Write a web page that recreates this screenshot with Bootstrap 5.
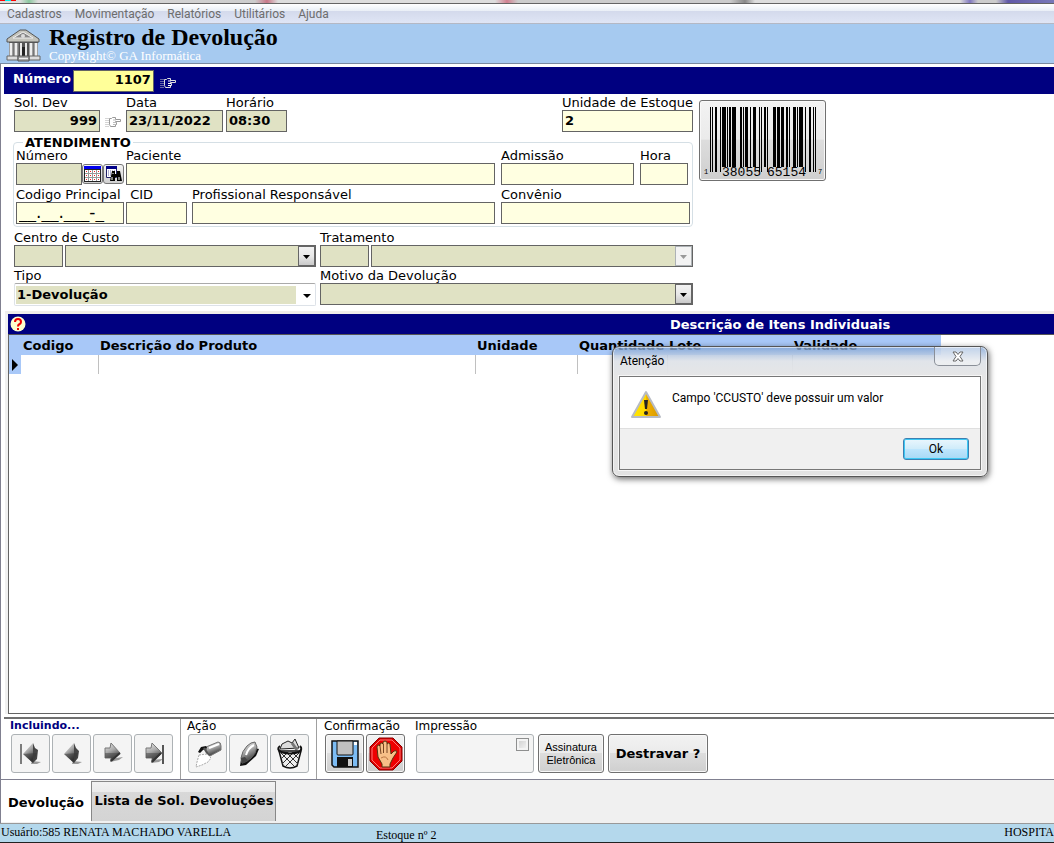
<!DOCTYPE html>
<html lang="pt-BR">
<head>
<meta charset="utf-8">
<meta name="viewport" content="width=device-width, initial-scale=1">
<title>Registro de Devolução</title>
<link href="https://cdn.jsdelivr.net/npm/bootstrap@5.3.0/dist/css/bootstrap.min.css" rel="stylesheet">
<style>
:root { --navy:#000080; --sky:#a6caf0; --olive:#e0e2c4; --cream:#ffffe1; --line:#646464; }
body { font-family:"DejaVu Sans",Verdana,sans-serif; font-size:13px; line-height:15px; color:#000; background:#fff; overflow-x:hidden; }
button { font:inherit; color:inherit; padding:0; }
.desk-strip { height:4px; border-bottom:1px solid #646464; background:
  linear-gradient(90deg,#f00 0 5px,#0ee 5px 11px,#f00 11px 16px,transparent 16px) 0 0/100% 1px no-repeat,
  linear-gradient(90deg,#ddd 0 20px,#8cc8a0 29px,#ddd 38px,#ccc 255px,#c87888 267px,#ddd 278px,#ddd 495px,#d08090 507px,#ccc 518px,#ccc 730px,#888 745px,#ddd 755px,#ddd 960px,#8078c0 970px,#ccc 978px,#ccc 996px,#6058a8 1008px,#7878b8); }
.menu-strip { height:20px; padding-left:7px; gap:13px; font:12px/20px Roboto,"Noto Sans",sans-serif; background:linear-gradient(#fff,#e8eef6 38%,#d4daec 39%,#dfe5f5); border-bottom:1px solid #b4b8c4; }
.menu-strip a { color:#6d6d6d; text-decoration:none; }
.title-strip { height:40px; background:var(--sky); border-bottom:1px solid #7a8aa0; padding-left:6px; font-family:"Liberation Serif",serif; }
.title-strip h1 { font-size:24px; line-height:27px; font-weight:700; margin:0; }
.title-strip p { font-size:13px; line-height:10px; color:#fff; margin:0; }
.workspace { border-left:1px solid #808090; }
.number-strip { height:27px; margin:3px 0 0 3px; padding-left:9px; gap:2px; background:var(--navy); color:#fff; font-weight:700; }
.box { display:block; width:100%; height:22px; min-width:0; border:1px solid var(--line); border-radius:0; padding:0 2px 2px; color:#000; background-color:var(--cream); font:bold 13px/18px "DejaVu Sans",Verdana,sans-serif; appearance:none; outline:0; }
.box-olive { background-color:var(--olive); }
.box-num { width:81px; background-color:#ffff99; }
.box-mask { font-weight:400; font-size:17px; }
.hand { border:0; background:none; display:block; }
.combo { background-repeat:no-repeat; background-position:right 0 center; background-image:url("data:image/svg+xml,%3Csvg xmlns='http://www.w3.org/2000/svg' width='17' height='20'%3E%3ClinearGradient id='a' x2='0' y2='1'%3E%3Cstop stop-color='%23f3f3f3'/%3E%3Cstop offset='.5' stop-color='%23e8e8e8'/%3E%3Cstop offset='1' stop-color='%23c8c8c8'/%3E%3C/linearGradient%3E%3Crect x='.5' y='.5' width='16' height='19' fill='url(%23a)' stroke='%23666'/%3E%3Cpath d='M5 9h7l-3.5 4z'/%3E%3C/svg%3E"); }
.combo-off { background-image:url("data:image/svg+xml,%3Csvg xmlns='http://www.w3.org/2000/svg' width='17' height='20'%3E%3Crect x='.5' y='.5' width='16' height='19' fill='%23f3f3f3' stroke='%23adb2b5'/%3E%3Cpath d='M5 9h7l-3.5 4z' fill='%23999'/%3E%3C/svg%3E"); opacity:1; }
.combo-open { height:23px; padding:0 2px; border-color:#aaa #dde2e8 #dde2e8; border-radius:2px; background-color:#fff; background-image:linear-gradient(var(--olive),var(--olive)),url("data:image/svg+xml,%3Csvg xmlns='http://www.w3.org/2000/svg' width='17' height='20'%3E%3Cpath d='M5 9h8l-4 4z'/%3E%3C/svg%3E"); background-size:calc(100% - 20px) 18px,17px 20px; background-position:1px 2px,right 0 center; }
.form-side { width:679px; }
.form-zone { padding:1px 0 0 13px; gap:6px; }
.fields { display:grid; }
.fields label { display:block; line-height:15px; white-space:nowrap; }
.f-top { grid-template-columns:86px 20px 97px 61px 1fr 131px; column-gap:3px; }
.f-top > :last-child { grid-column:6; }
.f-pat { grid-template-columns:110px 375px 139px 48px; }
.f-prof { grid-template-columns:110px 66px 309px 189px; margin-top:2px; }
.w-id { width:108px; } .w-pat { width:369px; } .w-adm { width:133px; } .w-cid { width:61px; } .w-prof { width:303px; }
.f-cost { grid-template-columns:302px 373px; gap:1px 4px; }
.pair { display:grid; grid-template-columns:49px 1fr; gap:2px; }
.attend { border:1px solid #d5dfe5; border-radius:4px; padding:0 2px 2px; margin:4px 0 3px -1px; width:680px; }
.attend legend { float:none; width:auto; font-size:13px; line-height:13px; font-weight:700; padding:0 2px; margin:0 0 -1px 7px; }
.mini { width:21px; height:20px; border:1px solid #777; border-radius:3px; background:linear-gradient(#f4f4f4,#d0d0d0); display:flex; align-items:center; justify-content:center; }
.raised { border:1px solid #707070; border-radius:3px; background:linear-gradient(#f2f2f2,#ebebeb 48%,#ddd 50%,#cfcfcf); box-shadow:inset 0 0 0 1px #f8f8f8; }
.flat { border:1px solid #adb2b5; border-radius:3px; background:#f4f4f4; }
.barcode { margin-top:5px; }
.items { position:relative; border-left:3px solid #f0f0f0; border-top:3px solid #f0eeea; margin:5px 0 0 4px; }
.items-body { border-left:1px solid var(--line); border-bottom:1px solid var(--line); }
.items-title { height:21px; background:var(--navy); color:#fff; font-weight:700; border-bottom:1px solid #555; padding-left:2px; }
.items-title span { margin-left:644px; }
.grid-data { table-layout:fixed; width:932px; border-collapse:collapse; }
.grid-data th { background:#a8c8f8; height:20px; padding:0 2px; font-weight:700; white-space:nowrap; }
.grid-data td { height:19px; padding:0; border-right:1px solid #c0c0c0; }
.grid-data td:first-child { background:#a8c8f8; border:0; }
.grid-data td:last-child { border:0; }
.c-mark{width:12px}.c-code{width:77px}.c-name{width:377px}.c-unit{width:102px}.c-qty{width:90px}.c-lot{width:125px}.c-due{width:149px}
.alert-win { position:absolute; left:604px; top:32px; width:376px; height:131px; padding:0 6px 7px; border:1px solid #555; border-radius:7px; background:linear-gradient(rgba(120,158,210,.75),rgba(222,226,232,.92) 14px,#e6e6e6 30px,#e2e2e2); box-shadow:inset 0 0 0 1px #fff9,1px 2px 6px #0009; font:12px/16px Roboto,"Noto Sans",sans-serif; color:#000; }
.alert-head { height:29px; padding-left:1px; }
.alert-head span { padding-top:6px; }
.alert-close { width:47px; height:19px; border:1px solid #8a8f98; border-top:0; border-radius:0 0 5px 5px; background:#ffffff60; }
.alert-box { border:1px solid #777; box-shadow:0 0 0 1px #f6f6f6; background:#fff; }
.alert-msg { height:52px; padding:13px 10px 0; gap:10px; border-bottom:1px solid #dfdfdf; }
.alert-foot { height:40px; background:#f0f0f0; padding:9px 11px; }
.ok { width:66px; height:22px; border:1px solid #3c7fb1; border-radius:3px; background:linear-gradient(#eaf6fd,#d0ecfa 48%,#bee6fd 50%,#a7d9f5); box-shadow:inset 0 0 0 1px #3cc8f4; }
.tools { border-top:2px solid #707070; margin:3px 0 0 3px; }
.tools section { padding:0 7px 0 7px; border-right:1px solid #a0a0a0; height:60px; }
.tools section.no-rule { border:0; padding:0 3px 0 8px; }
.tools h2 { font-size:12px; line-height:14px; margin:0 0 1px -1px; font-weight:400; }
.tools .mode { font-size:11px; font-weight:700; color:var(--navy); }
.btn-row { display:flex; gap:2px; }
.tool { width:39px; height:39px; display:flex; align-items:center; justify-content:center; }
.print-box { width:118px; height:39px; padding:3px 4px; }
.tick { appearance:none; width:13px; height:13px; border:1px solid #8e8f8f; background:linear-gradient(135deg,#ccc,#f8f8f8); box-shadow:inset 0 0 0 2px #f4f4f4; margin:0; }
.sign { width:66px; height:39px; font:11px/13px "Liberation Sans",Arial,sans-serif; }
.unlock { width:100px; height:39px; font-weight:700; }
.tab-strip { height:44px; background:#f0f0f0; border-top:1px solid #808090; }
.tab-on { border:0; background:#fff; width:90px; height:42px; padding-top:3px; font-weight:700; }
.tab-off { border:1px solid #888; border-width:1px 1px 0; background:linear-gradient(#f2f2f2,#ebebeb 25%,#d8d8d8 27%,#d4d4d4); width:185px; height:40px; margin-top:1px; font-weight:700; padding:0 0 2px 1px; white-space:nowrap; }
.status { display:grid; grid-template-columns:375px 1fr auto; height:20px; padding-left:1px; background:#b4d8ec; border-top:1px solid #999; border-bottom:1px solid #222; font:12px/17px "Liberation Serif",serif; white-space:nowrap; }
.status .low { padding-top:3px; line-height:16px; }
</style>
</head>
<body class="d-flex flex-column min-vh-100">
<div class="desk-strip"></div>
<nav class="menu-strip d-flex" aria-label="Menu">
  <a href="#">Cadastros</a><a href="#">Movimentação</a><a href="#">Relatórios</a><a href="#">Utilitários</a><a href="#">Ajuda</a>
</nav>
<header class="title-strip d-flex">
  <svg class="mt-1 me-2" width="35" height="34" viewBox="0 0 35 34" aria-hidden="true">
    <path d="M1 11L14 2h6l13 9v3H1z" fill="#c4c4bc" stroke="#555"/><path d="M7 10l10-6 10 6z" fill="#888" stroke="#eee"/><circle cx="17" cy="8" r="2" fill="#ddd"/>
    <path d="M3 14h29v15H3z" fill="#555"/><path d="M5 15v13M10 15v13M25 15v13M30 15v13" stroke="#eee" stroke-width="3"/><path d="M7 15v13M12 15v13M27 15v13" stroke="#999"/>
    <path d="M14 19h7v10h-7z" fill="#222"/><path d="M15 15v13M20 15v13" stroke="#e8e8e8" stroke-width="2"/>
    <path d="M1 28h11v4H1zM23 28h11v4H23z" fill="#ddd" stroke="#666"/><path d="M12 28h11v5H12z" fill="#aaa" stroke="#555"/><path d="M13 30.500h9" stroke="#eee"/>
  </svg>
  <div><h1>Registro de Devolução</h1><p>CopyRight© GA Informática</p></div>
</header>

<main class="workspace d-flex flex-column flex-grow-1">
  <div class="number-strip d-flex align-items-center">
    <label for="numero" class="pb-1">Número</label>
    <input id="numero" class="box box-num text-end" value="1107">
    <button class="hand ms-1 mt-1" aria-label="Buscar número">
      <svg class="d-block" width="17" height="12" viewBox="0 0 17 12"><path d="M1 2v9M3 2v9" stroke="#ccc" stroke-dasharray="1 1"/><path d="M4.500 2.500h2l1-1h3v2h5v2h-5v1h1v2h-1v2h-5l-1-2z" fill="#000080" stroke="#e0e0e0"/><path d="M8 4h3M8 6.500h3M8 8.500h3" stroke="#fff"/></svg>
    </button>
  </div>

  <div class="form-zone d-flex">
    <form class="form-side flex-shrink-0">
      <div class="fields f-top">
        <div><label for="soldev">Sol. Dev</label><input id="soldev" class="box box-olive text-end" value="999"></div>
        <button type="button" class="hand align-self-end pb-1" aria-label="Buscar solicitação">
          <svg class="d-block mx-auto" width="17" height="12" viewBox="0 0 17 12"><path d="M1 2v9M3 2v9" stroke="#aaa" stroke-dasharray="1 1"/><path d="M4.500 2.500h2l1-1h3v2h5v2h-5v1h1v2h-1v2h-5l-1-2z" fill="#fff" stroke="#999"/><path d="M8 4h3M8 6.500h3M8 8.500h3" stroke="#bbb"/></svg>
        </button>
        <div><label for="data">Data</label><input id="data" class="box box-olive" value="23/11/2022"></div>
        <div><label for="horario">Horário</label><input id="horario" class="box box-olive" value="08:30"></div>
        <div><label for="unidade">Unidade de Estoque</label><input id="unidade" class="box" value="2"></div>
      </div>

      <fieldset class="attend">
        <legend>ATENDIMENTO</legend>
        <div class="fields f-pat">
          <div class="w-id"><label for="atnum">Número</label>
            <div class="d-flex align-items-center">
              <input id="atnum" class="box box-olive">
              <button type="button" class="mini flex-shrink-0" aria-label="Calendário"><svg width="17" height="16" shape-rendering="crispEdges"><path fill="#222" d="M0 0h17v16H0z"/><path fill="#00e" d="M0 0h17v3H0z"/><path fill="#fff" d="M1 4h15v11H1z"/><path d="M1 7.500h15M1 11.500h15M4.500 4v11M8.500 4v11M12.500 4v11" stroke="#999"/><path d="M2 5.500h14M2 9.500h14M2 13.500h14" stroke="#e22" stroke-dasharray="1 3"/></svg></button>
              <button type="button" class="mini flex-shrink-0" aria-label="Localizar"><svg width="17" height="16"><path fill="#fff" stroke="#226" d="M1.500 1.500h10v10h-10z"/><path fill="#008" d="M1 0h11v3H1z"/><path d="M3 5h7M3 7h5M3 9h4" stroke="#66a" stroke-dasharray="1 1"/><path d="M7 5h3v3h2V5h3l2 10h-5v-4h-2v4H5z"/><path d="M7 11v3M14 11v3M8 7v1" stroke="#fff"/></svg></button>
            </div></div>
          <div class="w-pat"><label for="paciente">Paciente</label><input id="paciente" class="box"></div>
          <div class="w-adm"><label for="admissao">Admissão</label><input id="admissao" class="box"></div>
          <div><label for="hora">Hora</label><input id="hora" class="box"></div>
        </div>
        <div class="fields f-prof">
          <div class="w-id"><label for="codigo">Codigo Principal</label><input id="codigo" class="box box-mask" value="__.__.___-_"></div>
          <div class="w-cid"><label for="cid">&nbsp;CID</label><input id="cid" class="box"></div>
          <div class="w-prof"><label for="prof">Profissional Responsável</label><input id="prof" class="box"></div>
          <div><label for="conv">Convênio</label><input id="conv" class="box"></div>
        </div>
      </fieldset>

      <div class="fields f-cost">
        <div><label for="cc">Centro de Custo</label>
          <div class="pair"><input id="cc" class="box box-olive"><select class="box box-olive combo" aria-label="Centro de Custo"><option></option></select></div></div>
        <div><label for="trat">Tratamento</label>
          <div class="pair"><input id="trat" class="box box-olive"><select class="box box-olive combo combo-off" aria-label="Tratamento" disabled><option></option></select></div></div>
        <div><label for="tipo">Tipo</label><select id="tipo" class="box combo combo-open"><option>1-Devolução</option></select></div>
        <div><label for="motivo">Motivo da Devolução</label><select id="motivo" class="box box-olive combo"><option></option></select></div>
      </div>
    </form>
    <div>
      <button class="barcode raised d-block" aria-label="Código de barras">
        <svg class="d-block" width="125" height="79" viewBox="0 0 125 79">
          <path shape-rendering="crispEdges" d="M10 6h1v65h-1zM12 6h1v65h-1zM15 6h2v65h-2zM20 6h1v65h-1zM22 6h4v60h-4zM27 6h1v60h-1zM29 6h2v60h-2zM32 6h4v60h-4zM40 6h2v60h-2zM43 6h1v60h-1zM45 6h3v60h-3zM50 6h1v60h-1zM53 6h3v60h-3zM59 6h1v65h-1zM61 6h1v65h-1zM64 6h2v60h-2zM67 6h1v65h-1zM73 6h3v60h-3zM77 6h3v60h-3zM81 6h3v60h-3zM86 6h2v60h-2zM89 6h1v60h-1zM93 6h3v60h-3zM97 6h1v60h-1zM99 6h4v60h-4zM105 6h1v65h-1zM109 6h2v65h-2zM113 6h1v65h-1zM115 6h1v65h-1z"/>
          <g font-family="Liberation Mono,monospace" font-size="13"><text x="22" y="75">38055</text><text x="67" y="75">65154</text></g>
          <g font-family="Liberation Mono,monospace" font-size="7"><text x="4" y="73">1</text><text x="118" y="73">7</text></g>
        </svg>
      </button>
    </div>
  </div>

  <section class="items d-flex flex-column flex-grow-1">
    <div class="items-title d-flex align-items-center">
      <svg width="16" height="16" aria-hidden="true"><circle cx="8" cy="8" r="7.500" fill="#ffc"/><path d="M5 6q0-3 3-3t3 3q0 1.500-2 2.500-1 .500-1 2" fill="none" stroke="#e00" stroke-width="2"/><path d="M7 12h2v2H7z" fill="#e00"/></svg>
      <span>Descrição de Itens Individuais</span>
    </div>
    <div class="items-body flex-grow-1">
      <table class="grid-data">
        <colgroup><col class="c-mark"><col class="c-code"><col class="c-name"><col class="c-unit"><col class="c-qty"><col class="c-lot"><col class="c-due"></colgroup>
        <thead><tr><th></th><th>Codigo</th><th>Descrição do Produto</th><th>Unidade</th><th>Quantidade</th><th>Lote</th><th>Validade</th></tr></thead>
        <tbody><tr><td><svg class="d-block" width="10" height="12"><path d="M3 0l6 6-6 6z"/></svg></td><td></td><td></td><td></td><td></td><td></td><td></td></tr></tbody>
      </table>
    </div>
    <div class="alert-win" role="alertdialog" aria-labelledby="aviso">
      <div class="alert-head d-flex justify-content-between">
        <span id="aviso">Atenção</span>
        <button class="alert-close d-flex align-items-center justify-content-center" aria-label="Fechar"><svg width="12" height="11"><path d="M1 1h3l2 2.500L8 1h3L8 5.500l3 4.500H8L6 7.500 4 10H1l3-4.500z" fill="#fff" stroke="#666"/></svg></button>
      </div>
      <div class="alert-box">
        <div class="alert-msg d-flex">
          <svg width="32" height="29" viewBox="0 0 32 29" aria-hidden="true"><defs><linearGradient id="warn"><stop stop-color="#ffe800"/><stop offset=".5" stop-color="#ffd800"/><stop offset=".52" stop-color="#f0b000"/><stop offset="1" stop-color="#d89800"/></linearGradient></defs><path d="M16 2L30 27H2z" fill="url(#warn)" stroke="#b8bcc4" stroke-width="2" stroke-linejoin="round"/><path d="M14 10h4l-1 9h-2z" fill="#222"/><circle cx="16" cy="23" r="2" fill="#222"/></svg>
          <span>Campo 'CCUSTO' deve possuir um valor</span>
        </div>
        <div class="alert-foot text-end"><button class="ok">Ok</button></div>
      </div>
    </div>
  </section>

  <div class="tools d-flex">
    <section><h2 class="mode">Incluindo...</h2>
      <div class="btn-row">
        <svg width="0" height="0" class="position-absolute"><defs><linearGradient id="metal" x2="0.4" y2="1"><stop stop-color="#eee"/><stop offset=".5" stop-color="#aaa"/><stop offset="1" stop-color="#333"/></linearGradient></defs></svg>
        <button class="tool flat" aria-label="Primeiro"><svg width="26" height="26"><path d="M14 20l9 1-4 2-6 0z" fill="#999"/><path d="M3 3v20" stroke="#555" stroke-width="1.500"/><path d="M15 2v20L5 13z" fill="url(#metal)"/><path d="M15 2l2 5 3 2-1 9-4 4z" fill="#444"/><path d="M5 13l14-1-4 10z" fill="#333" opacity=".5"/></svg></button>
        <button class="tool flat" aria-label="Anterior"><svg width="26" height="26"><path d="M14 20l9 1-4 2-6 0z" fill="#999"/><path d="M15 2v20L5 13z" fill="url(#metal)"/><path d="M15 2l2 5 3 3-1 7-4 5z" fill="#444"/><path d="M5 13l14-1-4 10z" fill="#333" opacity=".5"/></svg></button>
        <button class="tool flat" aria-label="Próximo"><svg width="26" height="26"><path d="M10 18l13-2-4 3-9 2z" fill="#999"/><path d="M5 7h5l1-5 9 10-9 8v-3H5z" fill="url(#metal)" stroke="#777"/><path d="M5 12h14l-8 8v-3H5z" fill="#444" opacity=".5"/><path d="M11 20l9-8" stroke="#333" stroke-width="2"/></svg></button>
        <button class="tool flat" aria-label="Último"><svg width="26" height="26"><path d="M10 19l12-1-4 3-8 1z" fill="#999"/><path d="M5 7h5l1-5 10 10-10 9v-4H5z" fill="url(#metal)" stroke="#777"/><path d="M5 12h15l-9 9v-4H5z" fill="#444" opacity=".5"/><path d="M11 21l9-9" stroke="#333" stroke-width="2"/><path d="M22 4v19" stroke="#555" stroke-width="2"/></svg></button>
      </div>
    </section>
    <section><h2>Ação</h2>
      <div class="btn-row">
        <button class="tool flat" aria-label="Novo"><svg width="28" height="28"><path d="M12 7l12-5q3 0 3 4v4l-11 6q-3-1-4-9z" fill="url(#metal)" stroke="#777"/><path d="M15 8l10-4" stroke="#fff" stroke-width="2"/><path d="M4 12l3-5 5-1 1 2-4 2-3 3z" fill="#111"/><path d="M10 8l5 8" stroke="#555" stroke-width="2"/><path d="M5 15l8-1 4 4-3 4-6 3-6 2 1-5z" fill="#fff" stroke="#aaa" stroke-dasharray="2 1"/></svg></button>
        <button class="tool flat" aria-label="Editar"><svg width="26" height="28"><path d="M5 19L19 8l4 1-3 7-10 9-6 1z" fill="#111"/><path d="M5 18q1-7 6-12 4-4 8-4l2 5q-1 7-6 11-4 4-9 5z" fill="url(#metal)" stroke="#666"/><path d="M5 18l4-1 3 4-6 3z" fill="#444"/><path d="M10 15q2-7 8-10" fill="none" stroke="#fff" stroke-width="2"/></svg></button>
        <button class="tool flat" aria-label="Excluir"><svg width="28" height="32"><path d="M4 11L6 6l6-3 4 2 3-4 4 9z" fill="#ddd" stroke="#222"/><path d="M16 5l5 7" stroke="#777" stroke-width="3"/><path d="M3 13l4 15q7 4 14 0l4-15z" fill="#eee" stroke="#111" stroke-width="1.500"/><path d="M5 15l14 14M10 14l12 12M16 14l7 7M23 15L9 29M18 14L6 26M12 14l-7 7" stroke="#333"/><path d="M4 8q-4 3 1 6 9 3 18 0 4-3 1-6" fill="none" stroke="#111" stroke-width="2"/></svg></button>
      </div>
    </section>
    <section class="no-rule"><h2>Confirmação</h2>
      <div class="btn-row">
        <button class="tool raised" aria-label="Salvar"><svg width="28" height="28"><path d="M1 1h26v26H3l-2-2z" fill="#7cbcf4" stroke="#111" stroke-width="1.500"/><path d="M6 1h16v13q0 1-1 1H7q-1 0-1-1z" fill="#c0c0c0" stroke="#111"/><path d="M23 2h3v3h-3z" fill="#fff"/><path d="M6 17h16v10H6z" fill="#111"/><path d="M17 19h4v7h-4z" fill="#ccc"/></svg></button>
        <button class="tool raised" aria-label="Cancelar"><svg width="34" height="34"><path d="M10 1h14l9 9v14l-9 9H10l-9-9V10z" fill="#d00" stroke="#800"/><path d="M11 3h12l8 8v12l-8 8H11l-8-8V11z" fill="#e00" stroke="#f77"/><path d="M9 20L8 10q0-2 2-2l1 1V7q2-2 3 0V5q2-2 4 0v2q2-2 3 0l1 10 3-3q3-1 3 1l-4 6-3 6v3h-8v-3z" fill="#f8c088" stroke="#531"/><path d="M11 9l1 8M14.500 7v9M18 7v9" stroke="#742"/><path d="M12 21q5-3 7 2" fill="none" stroke="#b74"/></svg></button>
      </div>
    </section>
    <section class="no-rule"><h2>Impressão</h2>
      <div class="d-flex gap-1">
        <div class="print-box flat d-flex justify-content-end"><input type="checkbox" class="tick" aria-label="Impressão"></div>
        <button class="sign raised">Assinatura<br>Eletrônica</button>
        <button class="unlock raised">Destravar ?</button>
      </div>
    </section>
  </div>
  <div class="tab-strip d-flex" role="tablist">
    <button class="tab-on" role="tab" aria-selected="true">Devolução</button>
    <button class="tab-off" role="tab" aria-selected="false">Lista de Sol. Devoluções</button>
  </div>
</main>
<footer class="status"><span>Usuário:585 RENATA MACHADO VARELLA</span><span class="low">Estoque nº 2</span><span>HOSPITA</span></footer>
<script src="https://cdn.jsdelivr.net/npm/bootstrap@5.3.0/dist/js/bootstrap.bundle.min.js"></script>
</body>
</html>
